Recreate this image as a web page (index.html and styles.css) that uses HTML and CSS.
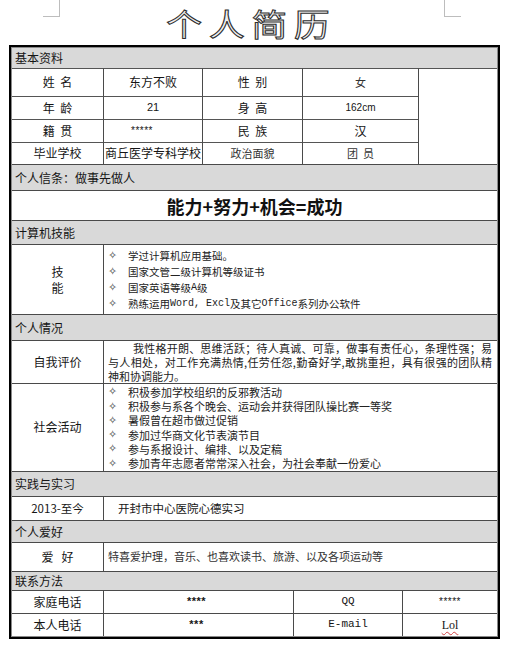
FILE: index.html
```html
<!DOCTYPE html>
<html lang="zh-CN">
<head>
<meta charset="utf-8">
<title>个人简历</title>
<link rel="stylesheet" href="styles.css">
</head>
<body>
<header class="page-head">
  <span class="crop crop-left"></span>
  <h1 class="title"><span class="title-text">个人简历</span></h1>
  <span class="crop crop-right"></span>
</header>
<main class="resume">
  <div class="inner">
    <div class="sec-head first h-20">基本资料</div>
    <div class="basic">
      <div class="cell photo"></div>
      <div class="cell c1">姓&nbsp;&nbsp;名</div>
      <div class="cell">东方不败</div>
      <div class="cell">性&nbsp;&nbsp;别</div>
      <div class="cell fs">女</div>
      <div class="cell c1">年&nbsp;&nbsp;龄</div>
      <div class="cell latin">21</div>
      <div class="cell">身&nbsp;&nbsp;高</div>
      <div class="cell latin small">162cm</div>
      <div class="cell c1">籍&nbsp;&nbsp;贯</div>
      <div class="cell latin stars">*****</div>
      <div class="cell">民&nbsp;&nbsp;族</div>
      <div class="cell">汉</div>
      <div class="cell c1">毕业学校</div>
      <div class="cell">商丘医学专科学校</div>
      <div class="cell fs">政治面貌</div>
      <div class="cell fs">团&nbsp;&nbsp;员</div>
    </div>

    <div class="sec-head h-26">个人信条：做事先做人</div>
    <div class="motto">能力+努力+机会=成功</div>

    <div class="sec-head h-24">计算机技能</div>
    <div class="row two h-70">
      <div class="cell c1 stack"><span>技</span><span>能</span></div>
      <ul class="cell list skills">
        <li>学过计算机应用基础。</li>
        <li>国家文管二级计算机等级证书</li>
        <li>国家英语等级<span class="mono">A</span>级</li>
        <li>熟练运用<span class="mono">Word, Excl </span>及其它<span class="mono"> Office </span>系列办公软件</li>
      </ul>
    </div>

    <div class="sec-head h-26">个人情况</div>
    <div class="row two h-43">
      <div class="cell c1">自我评价</div>
      <div class="cell para">
        <span class="jline indent">我性格开朗、思维活跃；待人真诚、可靠，做事有责任心，条理性强；易</span>
        <span class="jline">与人相处，对工作充满热情,任劳任怨,勤奋好学,敢挑重担，具有很强的团队精</span>
        <span class="line">神和协调能力。</span>
      </div>
    </div>
    <div class="row two h-88">
      <div class="cell c1">社会活动</div>
      <ul class="cell list social">
        <li>积极参加学校组织的反邪教活动</li>
        <li>积极参与系各个晚会、运动会并获得团队操比赛一等奖</li>
        <li>暑假曾在超市做过促销</li>
        <li>参加过华商文化节表演节目</li>
        <li>参与系报设计、编排、以及定稿</li>
        <li>参加青年志愿者常常深入社会，为社会奉献一份爱心</li>
      </ul>
    </div>

    <div class="sec-head h-25">实践与实习</div>
    <div class="row two h-24">
      <div class="cell c1 latin-mix">2013-至今</div>
      <div class="cell text-left intern">开封市中心医院心德实习</div>
    </div>

    <div class="sec-head h-22">个人爱好</div>
    <div class="row two h-29">
      <div class="cell c1">爱&nbsp;&nbsp;&nbsp;好</div>
      <div class="cell text-left fs hobby">特喜爱护理，音乐、也喜欢读书、旅游、以及各项运动等</div>
    </div>

    <div class="sec-head h-19">联系方法</div>
    <div class="row contact h-23">
      <div class="cell c1">家庭电话</div>
      <div class="cell bold-stars">****</div>
      <div class="cell mono">QQ</div>
      <div class="cell stars-sm">*****</div>
    </div>
    <div class="row contact h-23">
      <div class="cell c1">本人电话</div>
      <div class="cell bold-stars">***</div>
      <div class="cell mono">E-mail</div>
      <div class="cell lol">Lol</div>
    </div>
  </div>
</main>
</body>
</html>
```

FILE: styles.css
```css
* {
  box-sizing: border-box;
  margin: 0;
  padding: 0;
}

body {
  margin: 0;
  width: 510px;
  background: #ffffff;
  color: #151515;
  font-family: "Noto Sans CJK SC", "Liberation Sans", sans-serif;
  font-size: 12px;
}

/* ---------- page header ---------- */
.page-head {
  height: 45px;
  display: flex;
  align-items: flex-start;
  padding: 0 49px 0 43px;
}

.crop {
  flex: none;
  width: 17px;
  height: 17px;
  border-bottom: 1px solid #bdbdbd;
}

.crop-left {
  border-right: 1px solid #bdbdbd;
}

.crop-right {
  border-left: 1px solid #bdbdbd;
}

.title {
  flex: 1;
  height: 45px;
  display: flex;
  justify-content: center;
  padding-right: 8px;
  font-size: 31px;
  font-weight: 400;
  line-height: 45px;
}

.title-text {
  display: inline-block;
  letter-spacing: 6px;
  padding-left: 6px;
  transform: scaleX(1.15);
  color: #efefef;
  -webkit-text-stroke: 1px #2e2e2e;
}

/* ---------- table frame ---------- */
.resume {
  margin-left: 9px;
  width: 491px;
  border: 2px solid #000;
}

.inner {
  border: 1px solid #8a8a8a;
}

.sec-head {
  display: flex;
  align-items: center;
  padding-left: 3px;
  background: #d9d9d9;
  border-top: 1px solid #4a4a4a;
  font-size: 12px;
  line-height: 1;
}

.sec-head.first {
  border-top: none;
}

.h-19 { height: 19px; }
.h-20 { height: 20px; }
.h-22 { height: 22px; }
.h-23 { height: 23px; }
.h-24 { height: 24px; }
.h-25 { height: 25px; }
.h-26 { height: 26px; }
.h-29 { height: 29px; }
.h-43 { height: 43px; }
.h-70 { height: 70px; }
.h-88 { height: 88px; }

.cell {
  display: flex;
  align-items: center;
  justify-content: center;
  border-left: 1px solid #4a4a4a;
  font-size: 12px;
  line-height: 1.2;
}

.cell.c1 {
  border-left: none;
}

/* ---------- basic info grid ---------- */
.basic {
  display: grid;
  grid-template-columns: 91px 99px 100px 116px 1fr;
  grid-template-rows: 28px 23px 23px 22px;
}

.basic .cell {
  border-top: 1px solid #555;
}

.basic .photo {
  grid-column: 5;
  grid-row: 1 / span 4;
}

.latin {
  font-family: "Liberation Sans", sans-serif;
  font-size: 11px;
}

.small {
  font-size: 10px;
}

.stars {
  justify-content: flex-start;
  padding-left: 27px;
  font-size: 10px;
  letter-spacing: 0.5px;
}

.fs {
  font-size: 11px;
  color: #333;
}

/* ---------- motto ---------- */
.motto {
  height: 30px;
  border-top: 1px solid #4a4a4a;
  display: flex;
  align-items: center;
  justify-content: center;
  font-size: 18px;
  font-weight: 700;
  color: #111;
}

/* ---------- generic rows ---------- */
.row {
  display: grid;
  border-top: 1px solid #4a4a4a;
}

.two {
  grid-template-columns: 91px 1fr;
}

.contact {
  grid-template-columns: 91px 190px 109px 1fr;
}

.stack {
  flex-direction: column;
  line-height: 16px;
}

.list {
  list-style: none;
  flex-direction: column;
  align-items: flex-start;
  justify-content: center;
  padding-left: 4px;
  color: #222;
}

.list li {
  display: flex;
  align-items: center;
  white-space: nowrap;
}

.list li::before {
  content: "✧";
  font-family: "DejaVu Sans", sans-serif;
  font-size: 11px;
  line-height: 1;
  width: 20px;
  flex: none;
  color: #333;
}

.skills li {
  font-size: 10.5px;
  line-height: 16px;
}

.social li {
  font-size: 11px;
  line-height: 14.3px;
}

.mono {
  font-family: "Liberation Mono", monospace;
}

.skills .mono {
  font-size: 10px;
}

.para {
  display: block;
  padding: 0 5px 0 4px;
  font-size: 11px;
  line-height: 14px;
  color: #222;
}

.jline,
.line {
  display: block;
  white-space: nowrap;
}

.jline {
  text-align: justify;
  text-align-last: justify;
}

.indent {
  padding-left: 25px;
}

.text-left {
  justify-content: flex-start;
}

.intern {
  padding-left: 14px;
  font-size: 11.5px;
}

.hobby {
  padding-left: 4px;
}

.latin-mix {
  font-size: 11.5px;
}

.bold-stars {
  font-family: "Liberation Sans", sans-serif;
  font-weight: 700;
  font-size: 11px;
  letter-spacing: 0.5px;
  padding-right: 4px;
}

.cell.mono {
  font-size: 11px;
}

.stars-sm {
  font-family: "Liberation Sans", sans-serif;
  font-size: 10px;
  letter-spacing: 0.5px;
}

.lol {
  font-family: "Liberation Serif", serif;
  font-size: 12px;
  text-decoration: underline wavy #d04040;
  text-decoration-thickness: 1px;
  text-underline-offset: 2px;
}
```
